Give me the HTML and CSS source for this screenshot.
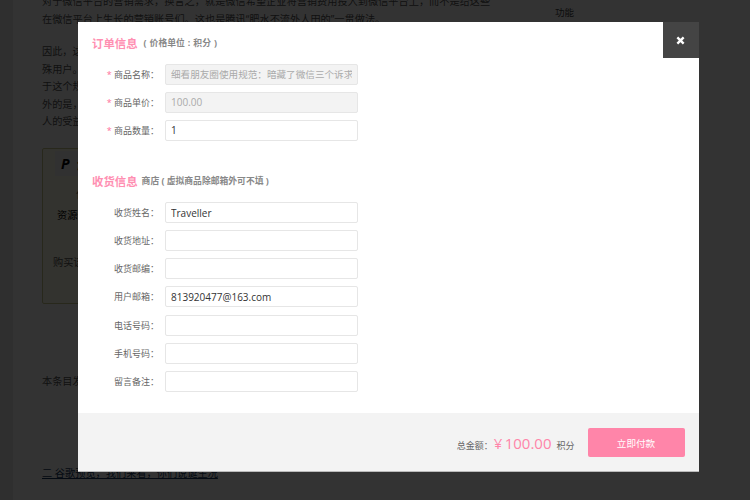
FILE: index.html
```html
<!DOCTYPE html>
<html lang="zh-CN">
<head>
<meta charset="utf-8">
<title>订单信息</title>
<link rel="stylesheet" href="styles.css">
</head>
<body>
<div class="page">
  <main class="article">
    <p class="para">对于微信平台的营销需求，换言之，就是微信希望企业将营销费用投入到微信平台上，而不是给这些在微信平台上生长的营销账号们。这也是腾讯“肥水不流外人田的”一贯做法。</p>
    <p class="para para-second">因此，这<br>殊用户。<br>于这个规<br>外的是，<br>人的受益</p>
    <section class="paybox">
      <div class="paybox-head"><span class="paybox-logo">P</span><span class="paybox-logo">付</span></div>
      <p class="paybox-line paybox-a">付</p>
      <p class="paybox-line paybox-b">资源价</p>
      <p class="paybox-line paybox-c">购买该</p>
    </section>
    <p class="meta">本条目发布于</p>
    <a class="next-link" href="#">二 谷歌预览，我们来看，你们说诞生况</a>
  </main>
  <aside class="side">功能</aside>
</div>

<div class="overlay"></div>

<div class="modal">
  <button class="close" type="button" aria-label="关闭">
    <svg class="close-icon" viewBox="0 0 10 10" aria-hidden="true"><path d="M1.5 1.5 8.5 8.5M8.5 1.5 1.5 8.5"/></svg>
  </button>
  <form class="modal-body">
    <h2 class="title">订单信息<small class="title-note title-note-gap">( 价格单位 : 积分 )</small></h2>
    <div class="rows">
      <label class="row"><span class="label"><i class="req">*</i> 商品名称：</span><input class="field field-cjk" disabled value="细看朋友圈使用规范：暗藏了微信三个诉求背后"></label>
      <label class="row"><span class="label"><i class="req">*</i> 商品单价：</span><input class="field" disabled value="100.00"></label>
      <label class="row"><span class="label"><i class="req">*</i> 商品数量：</span><input class="field" value="1"></label>
    </div>
    <h2 class="title title-second">收货信息<small class="title-note">商店 ( 虚拟商品除邮箱外可不填 )</small></h2>
    <div class="rows">
      <label class="row"><span class="label">收货姓名：</span><input class="field" value="Traveller"></label>
      <label class="row"><span class="label">收货地址：</span><input class="field"></label>
      <label class="row"><span class="label">收货邮编：</span><input class="field"></label>
      <label class="row"><span class="label">用户邮箱：</span><input class="field" value="813920477@163.com"></label>
      <label class="row"><span class="label">电话号码：</span><input class="field"></label>
      <label class="row"><span class="label">手机号码：</span><input class="field"></label>
      <label class="row"><span class="label">留言备注：</span><input class="field"></label>
    </div>
  </form>
  <footer class="modal-foot">
    <span class="total-label">总金额：</span>
    <span class="total-value">¥ 100.00</span>
    <span class="total-unit">积分</span>
    <button class="pay" type="button">立即付款</button>
  </footer>
</div>
</body>
</html>
```

FILE: styles.css
```css
* { box-sizing: border-box; }

html, body {
  margin: 0;
  height: 100%;
  overflow: hidden;
}

body {
  background: #ececec;
  font-family: "Open Sans", "Noto Sans CJK SC", sans-serif;
  color: #555;
}

.page {
  display: flex;
  margin-left: 13px;
  height: 500px;
  background: #fff;
  overflow: hidden;
}

.article {
  width: 450px;
  margin-left: 29px;
  margin-top: -7px;
  flex: none;
  font-size: 10.2px;
  line-height: 17.5px;
}

.para { margin: 0; }
.para-second { margin-top: 15.25px; }

.paybox {
  height: 156px;
  margin-top: 17px;
  padding: 2px 12px;
  background: #fffde8;
  border: 1px solid #c9c98a;
  border-radius: 2px;
}

.paybox-head {
  display: flex;
  gap: 6px;
  width: 60px;
  height: 25px;
  align-items: center;
  padding-left: 6px;
  background: #f4f4f4;
}

.paybox-logo {
  font-weight: 700;
  font-style: italic;
  font-size: 14px;
  color: #000;
}

.paybox-line { margin: 0; white-space: nowrap; }
.paybox-a { margin: 10px 0 0 21px; }
.paybox-b { margin: 3.5px 0 0 2px; color: #000; }
.paybox-c { margin-top: 29.5px; margin-left: -2px; }

.meta { margin: 69px 0 0; }

.next-link {
  display: block;
  width: 175px;
  margin-top: 74.5px;
  color: #14365c;
  white-space: nowrap;
}

.side {
  margin-left: 63px;
  margin-top: 4px;
  font-size: 9.6px;
  line-height: 17px;
  color: #444;
}

.overlay {
  position: fixed;
  inset: 0;
  background: rgba(0, 0, 0, .8);
}

.modal {
  position: absolute;
  left: 78px;
  top: 22px;
  width: 620.5px;
  height: 450px;
  background: #fff;
  display: flex;
  flex-direction: column;
}

.close {
  position: absolute;
  top: 0;
  right: 0;
  width: 36px;
  height: 36px;
  padding: 0;
  border: 0;
  background: #444;
  display: flex;
  align-items: center;
  justify-content: center;
}

.close-icon {
  width: 9px;
  height: 9px;
  fill: none;
  stroke: #fff;
  stroke-width: 2.6;
}

.modal-body {
  flex: 1;
  padding-top: 13px;
}

.title {
  margin: 0;
  padding-left: 14px;
  height: 17px;
  line-height: 17px;
  font-size: 11.4px;
  font-weight: 700;
  color: #ff8fb2;
  display: flex;
  align-items: center;
}

.title-second { margin-top: 32px; }

.title-note {
  font-size: 8.8px;
  font-weight: 700;
  color: #888;
  margin-left: 4px;
}

.title-note-gap {
  margin-left: 6px;
  word-spacing: .75px;
}

.rows {
  display: flex;
  flex-direction: column;
  gap: 7.1px;
  margin-top: 11.5px;
}

.title-second + .rows { margin-top: 12.5px; }

.row {
  display: flex;
  align-items: center;
  height: 21px;
}

.label {
  width: 87px;
  padding-right: 6px;
  text-align: right;
  font-size: 9px;
  color: #666;
  white-space: nowrap;
}

.req {
  font-style: normal;
  color: #ff6f9a;
}

.field {
  width: 193px;
  height: 21px;
  padding: 0 5px;
  border: 1px solid #e6e6e6;
  border-radius: 2px;
  background: #fff;
  color: #333;
  font-family: inherit;
  font-size: 10px;
  outline: 0;
}

.field-cjk { font-size: 9.6px; }

.field:disabled {
  background: #f3f3f3;
  color: #aaa;
}

.modal-foot {
  height: 59px;
  flex: none;
  background: #f3f3f3;
  border-bottom: 1px solid #bbb;
  display: flex;
  align-items: center;
  padding: 1px 14px 0 0;
  justify-content: flex-end;
}

.total-label {
  font-size: 9px;
  color: #666;
  margin-top: 5px;
}

.total-value {
  font-size: 15px;
  line-height: 20px;
  word-spacing: -1.5px;
  color: #ff85a9;
  margin-left: 1px;
}

.total-unit {
  font-size: 9px;
  color: #666;
  margin-left: 5px;
  margin-top: 5px;
}

.pay {
  width: 97px;
  height: 29px;
  margin-left: 13px;
  border: 0;
  border-radius: 2px;
  background: #ff85a9;
  color: #fff;
  font-family: inherit;
  font-size: 9.6px;
}
```
